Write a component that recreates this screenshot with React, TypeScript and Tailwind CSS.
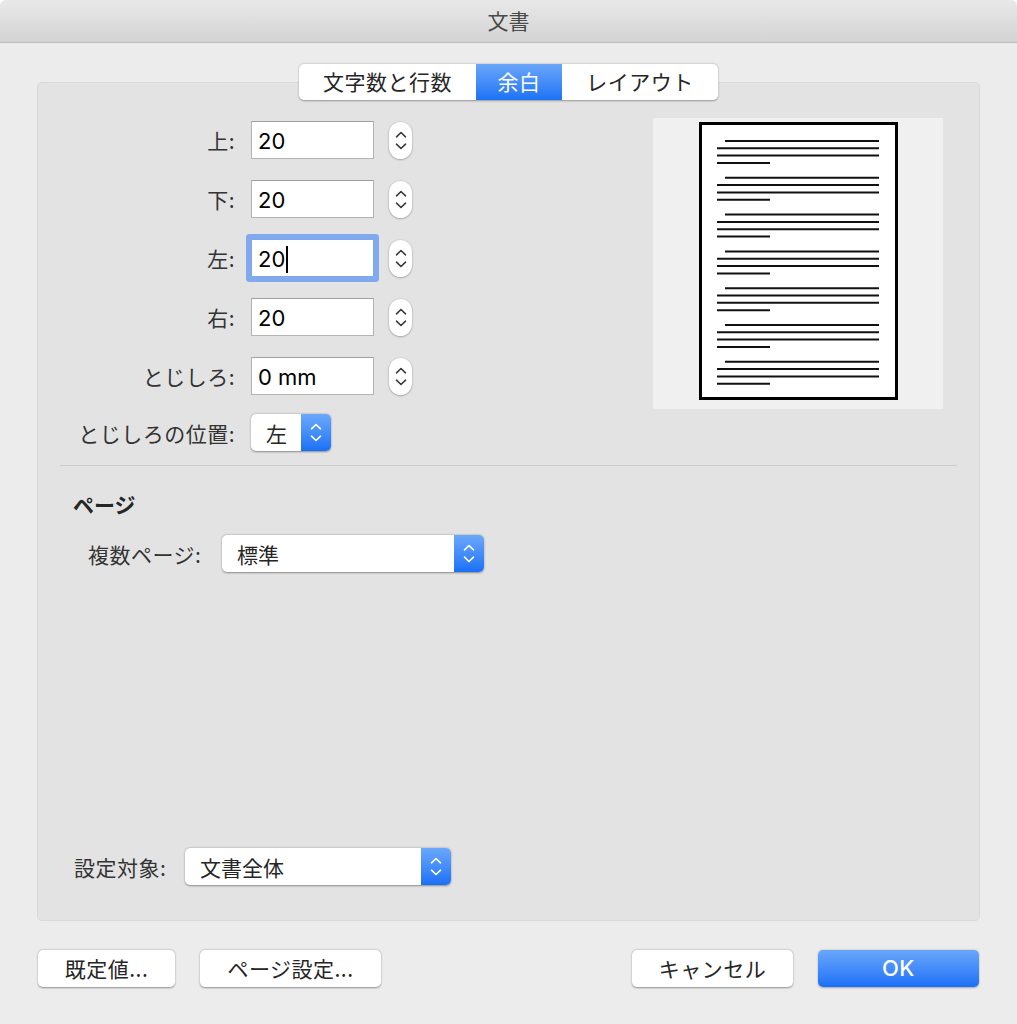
import React from "react";

const font = "font-['Hiragino_Sans','Noto_Sans_CJK_JP','Noto_Sans',sans-serif]";
const latin = "font-['Inter','Noto_Sans_CJK_JP',sans-serif]";

function Chevrons({ color = "#333", gap = "gap-[5px]" }: { color?: string; gap?: string }) {
  return (
    <span className={`flex flex-col items-center ${gap}`}>
      <svg width="12" height="7" viewBox="0 0 12 7">
        <path d="M1.5 5.8 6 1.5 10.5 5.8" fill="none" stroke={color} strokeWidth="1.6" strokeLinecap="round" strokeLinejoin="round" />
      </svg>
      <svg width="12" height="7" viewBox="0 0 12 7">
        <path d="M1.5 1.2 6 5.5 10.5 1.2" fill="none" stroke={color} strokeWidth="1.6" strokeLinecap="round" strokeLinejoin="round" />
      </svg>
    </span>
  );
}

function Stepper() {
  return (
    <div className="flex h-[37px] w-[23px] items-center justify-center rounded-full bg-white shadow-[0_0.5px_2px_rgba(0,0,0,0.4)]">
      <Chevrons color="#3a3a3a" />
    </div>
  );
}

function Popup({ label, className }: { label: string; className: string }) {
  return (
    <div className={`flex h-[37px] overflow-hidden rounded-[5px] bg-white shadow-[0_0.5px_2px_rgba(0,0,0,0.4)] ${className}`}>
      <span className="flex-1 pl-[15px] text-[21px] leading-[38px] text-[#262626]">{label}</span>
      <span className="flex w-[30px] items-center justify-center bg-gradient-to-b from-[#6ba8fb] to-[#1870f6]">
        <Chevrons color="#ffffff" />
      </span>
    </div>
  );
}

function Field({ label, value, focused }: { label: string; value: string; focused?: boolean }) {
  return (
    <div className="flex h-[38px] items-center">
      <span className="w-[197px] pt-[2px] text-right text-[21px] tracking-[0.5px] text-[#333]">{label}</span>
      <div
        className={`ml-[16px] flex h-[38px] w-[123px] items-center bg-white pl-[6px] pt-[2px] text-[22px] text-black ${latin} ${
          focused
            ? "rounded-[1px] border border-[#7ea8ee] shadow-[0_0_0_5px_#80a9ee]"
            : "border border-[#b3b3b3] border-t-[#a0a0a0]"
        }`}
      >
        {value}
        {focused && <span className="ml-[1px] inline-block h-[27px] w-[2px] bg-black" />}
      </div>
      <div className="ml-[15px]">
        <Stepper />
      </div>
    </div>
  );
}

function Preview() {
  const groups = [0, 1, 2, 3, 4, 5, 6];
  return (
    <div className="h-[291px] w-[290px] bg-[#f0f0f0]">
      <svg width="290" height="291" viewBox="0 0 290 291">
        <rect x="47.5" y="5.5" width="196" height="275" fill="#fff" stroke="#000" strokeWidth="3" />
        {groups.map((g) => {
          const y = 23 + g * 36.8;
          return (
            <g key={g} stroke="#111" strokeWidth="2">
              <line x1="72" y1={y} x2="226" y2={y} />
              <line x1="64" y1={y + 7.3} x2="226" y2={y + 7.3} />
              <line x1="64" y1={y + 14.6} x2="226" y2={y + 14.6} />
              <line x1="64" y1={y + 22} x2="117" y2={y + 22} />
            </g>
          );
        })}
      </svg>
    </div>
  );
}

function Button({ label, className, primary }: { label: string; className: string; primary?: boolean }) {
  return (
    <div
      className={`flex h-[37px] items-center justify-center rounded-[5px] tracking-[0.5px] ${
        primary
          ? `bg-gradient-to-b from-[#6aa7fb] to-[#1a6ff6] text-[22px] font-medium text-white shadow-[0_0.5px_2px_rgba(0,0,0,0.3)] ${latin}`
          : "bg-white text-[21px] text-[#262626] shadow-[0_0.5px_2px_rgba(0,0,0,0.4)]"
      } ${className}`}
    >
      {label}
    </div>
  );
}

export default function App() {
  return (
    <div className={`h-[1024px] w-[1017px] overflow-hidden bg-white ${font}`}>
      <div className="flex h-full flex-col overflow-hidden rounded-t-[6px] bg-[#ececec]">
        <div className="flex h-[43px] shrink-0 items-center justify-center border-b border-[#bdbdbd] bg-gradient-to-b from-[#e9e9e9] to-[#d3d3d3] text-[21px] text-[#4a4a4a]">
          文書
        </div>
        <div className="flex flex-1 flex-col px-[37px] pt-[21px]">
          <div className="relative z-10 flex justify-center">
            <div className="flex h-[36px] overflow-hidden rounded-[5px] bg-white text-[21px] tracking-[0.5px] text-[#262626] shadow-[0_0.5px_2px_rgba(0,0,0,0.35)]">
              <span className="flex w-[177px] items-center justify-center">文字数と行数</span>
              <span className="flex w-[86px] items-center justify-center bg-gradient-to-b from-[#69a6f9] to-[#1a72f6] text-white">余白</span>
              <span className="flex w-[156px] items-center justify-center">レイアウト</span>
            </div>
          </div>
          <div className="-mt-[18px] flex h-[839px] flex-col rounded-[5px] border border-[#d9d9d9] bg-[#e3e3e3]">
            <div className="flex pr-[36px] pt-[35px]">
              <div className="mt-[3px] flex flex-col gap-[21px]">
                <Field label="上:" value="20" />
                <Field label="下:" value="20" />
                <Field label="左:" value="20" focused />
                <Field label="右:" value="20" />
                <Field label="とじしろ:" value="0 mm" />
                <div className="-mt-[2px] flex h-[37px] items-center">
                  <span className="w-[197px] pt-[2px] text-right text-[21px] tracking-[0.5px] text-[#333]">とじしろの位置:</span>
                  <Popup label="左" className="ml-[16px] w-[80px]" />
                </div>
              </div>
              <div className="ml-auto">
                <Preview />
              </div>
            </div>
            <div className="mx-[22px] mt-[14px] h-px bg-[#cdcdcd]" />
            <div className="mt-[24px] h-[28px] pl-[35px] text-[21px] font-bold leading-[28px] text-[#262626]">ページ</div>
            <div className="mt-[17px] flex items-center pl-[50px]">
              <span className="w-[134px] pt-[2px] text-[21px] tracking-[0.5px] text-[#333]">複数ページ:</span>
              <Popup label="標準" className="w-[262px]" />
            </div>
            <div className="mt-auto flex items-center pb-[35px] pl-[36px]">
              <span className="w-[111px] pt-[2px] text-[21px] tracking-[0.5px] text-[#333]">設定対象:</span>
              <Popup label="文書全体" className="w-[266px]" />
            </div>
          </div>
          <div className="mt-[29px] flex items-center px-[1px]">
            <Button label="既定値..." className="w-[137px]" />
            <Button label="ページ設定..." className="ml-[25px] w-[181px]" />
            <Button label="キャンセル" className="ml-auto w-[161px]" />
            <Button label="OK" primary className="ml-[25px] w-[161px]" />
          </div>
        </div>
      </div>
    </div>
  );
}
